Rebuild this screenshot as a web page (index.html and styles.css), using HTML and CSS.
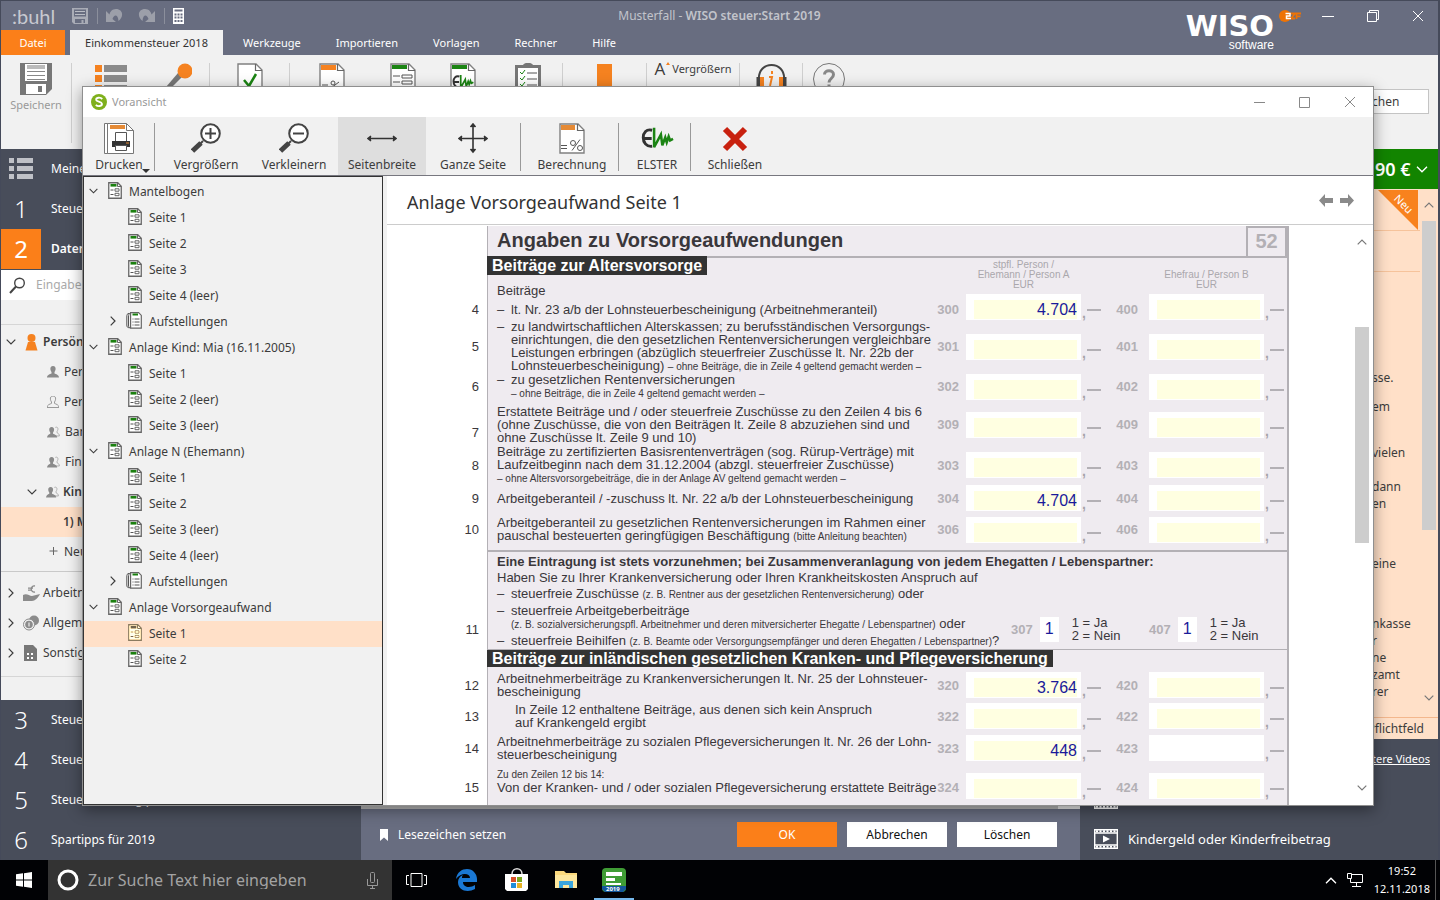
FILE: index.html
```html
<!DOCTYPE html>
<html lang="de">
<head>
<meta charset="utf-8">
<title>Musterfall - WISO steuer:Start 2019</title>
<link rel="stylesheet" href="styles.css">
</head>
<body>
<svg class="defs" aria-hidden="true">
  <symbol id="page" viewBox="0 0 14 17"><path d="M.75.75h9l3.5 3.5v12H.75z" fill="#fff" stroke="#666" stroke-width="1.3"/><path d="M9.5.8v3.7h3.7" fill="none" stroke="#666"/><path d="M2.5 2h6v2.6h-6z" fill="#1b8010"/><path d="M2.5 8h3M2.5 12.5h3" stroke="#555"/><path d="M7 6.800h4v2.400H7zM7 11.300h4v2.400H7z" fill="#fff" stroke="#666"/></symbol>
  <symbol id="stack" viewBox="0 0 16 17"><path d="M3.500 1.500C1 1 .8 3 .8 5v8c0 2 1 3 2.700 2.500M5 1C3 1 2.500 3 2.500 5v8c0 2 .5 3 1.500 3" fill="none" stroke="#555"/><path d="M4.600.7h8l2.700 2.700v12.800H4.600z" fill="#fff" stroke="#666" stroke-width="1.200"/><path d="M6.500 1.500h5.500v2H6.500z" fill="#1b8010"/><path d="M6.500 7h1m1 0h5m-7 3h1m1 0h5m-7 3h1m1 0h5" stroke="#555"/></symbol>
  <symbol id="down" viewBox="0 0 10 6"><path d="M.7.7 5 5 9.300.7" fill="none" stroke="currentColor" stroke-width="1.200"/></symbol>
  <symbol id="right" viewBox="0 0 6 10"><path d="M.7.7 5 5 .7 9.300" fill="none" stroke="currentColor" stroke-width="1.200"/></symbol>
  <symbol id="up" viewBox="0 0 10 6"><path d="M.7 5.300 5 1l4.300 4.300" fill="none" stroke="currentColor" stroke-width="1.200"/></symbol>
  <symbol id="person" viewBox="0 0 12 12"><path d="M6 0c2 0 2.800 1.500 2.600 3.200-.1 1.300-.7 2-1.100 2.800v1.400C9 8.200 11.800 8.500 12 11.500H0C.2 8.500 3 8.200 4.500 7.400V6c-.4-.8-1-1.500-1.100-2.800C3.200 1.500 4 0 6 0z"/></symbol>
  <symbol id="pair" viewBox="0 0 14 13"><path d="M9 1.500c2-.8 3 .5 2.800 2.200-.2 1-.6 1.600-.9 2.200v1.500c1 .5 2.300 1 2.500 3.400H9" fill="#f1f1f1" stroke="#aaa"/><g transform="translate(-1 1)" fill="#8b8b8b"><path d="M6 0c2 0 2.800 1.500 2.600 3.200-.1 1.300-.7 2-1.100 2.800v1.400C9 8.200 11.800 8.500 12 11.500H1C1.200 8.500 3 8.200 4.500 7.400V6c-.4-.8-1-1.500-1.100-2.800C3.200 1.500 4 0 6 0z"/></g></symbol>
  <symbol id="sheet" viewBox="0 0 26 31"><path d="M1 1h18l6 6v23H1z" fill="#fff" stroke="#808080" stroke-width="1.400"/><path d="M18.500 1v6.500H25" fill="none" stroke="#666" stroke-width="1.200"/></symbol>
  <symbol id="elw" viewBox="0 0 34 24"><path d="M11.500 3.500C-.5 0-1 21.500 11.500 20M3 12h8" fill="none" stroke="#333" stroke-width="3"/><path d="M13.500 1v20l7-13 1.500 11 3-8 1.500 5 2-6 1.500 4 3-1.500" fill="none" stroke="#1b8413" stroke-width="2.600"/></symbol>
  <symbol id="film" viewBox="0 0 24 20"><path d="M.7.7h22.600v18.600H.7zM0 4h24M0 16h24" fill="none" stroke="#fff" stroke-width="1.400"/><path d="M2 2.300h21M2 17.700h21" stroke="#fff" stroke-width="2" stroke-dasharray="2 1.500"/><path d="m9 6.500 7 3.500-7 3.500z" fill="#fff"/></symbol>
</svg>

<div class="desktop">
<div class="app">
  <header class="top">
    <div class="titlebar">
      <div class="quick">
        <span class="buhl">:buhl</span>
        <svg width="16" height="16" viewBox="0 0 16 16"><path d="M0 0h16v16H2l-2-2z" fill="#a9acb6"/><path d="M2 1.500h12v7H2zM3 11h10v4H3z" fill="#686d80"/><path d="M3 3.500h10m-10 3h10" stroke="#b9bcc4" fill="none"/><path d="M9.500 12h2v3h-2z" fill="#a9acb6"/></svg>
        <i class="tick"></i>
        <svg width="17" height="15" viewBox="0 0 17 15"><path d="M0 3v11h10l-3.500-3C8 6 12 6 12.500 13c6-5 4-12-2.500-12C6 1 4 4 3.500 6.500z" fill="#9c9fa9"/></svg>
        <svg class="redo" width="17" height="15" viewBox="0 0 17 15"><path d="M17 3v11H7l3.500-3C9 6 5 6 4.500 13-1.500 8 .5 1 7 1c4 0 6 3 6.500 5.500z" fill="#9c9fa9"/></svg>
        <i class="tick"></i>
        <svg width="11" height="16" viewBox="0 0 11 16"><path d="M0 0h11v16H0z" fill="#fff"/><path d="M1.500 1.500h8v2h-8z" fill="#686d80"/><path d="M1.500 6.500h8m-8 3h8m-8 3.500h8" stroke="#686d80" stroke-width="2" stroke-dasharray="2 1"/></svg>
      </div>
      <div class="caption">Musterfall - <b>WISO steuer:Start 2019</b></div>
      <div class="wincontrols">
        <button aria-label="Minimieren"><svg width="12" height="12"><path d="M0 6.500h12" stroke="#fff"/></svg></button>
        <button aria-label="Wiederherstellen"><svg width="12" height="12" fill="none" stroke="#fff"><path d="M.5 2.500h9v9h-9zM2.500 2.500v-2h9v9h-2"/></svg></button>
        <button aria-label="Schließen"><svg width="12" height="12"><path d="m1 1 10 10M11 1 1 11" stroke="#fff"/></svg></button>
      </div>
    </div>
    <nav class="tabs">
      <button class="file">Datei</button><button class="current">Einkommensteuer 2018</button><button>Werkzeuge</button><button>Importieren</button><button>Vorlagen</button><button>Rechner</button><button>Hilfe</button>
    </nav>
    <div class="wiso"><span class="wiso-name">WISO</span><span class="wiso-sub">software</span>
      <svg class="zdf" width="22" height="14" viewBox="0 0 22 14"><circle cx="6" cy="7" r="6" fill="#ee7305"/><path d="M11 4.500h5l-4 5h4M17.500 10V4.500H22M17.500 7.300h4" stroke="#ee7305" stroke-width="1.800" fill="none"/><path d="M6.500 4.500h4.500v2.500H7.500v2.500H12" fill="none" stroke="#fff" stroke-width="1.500"/></svg>
    </div>
  </header>

  <div class="ribbon">
    <div class="r w70"><svg width="32" height="32" viewBox="0 0 32 32"><path d="M0 0h32v26l-6 6H0z" fill="#777"/><path d="M5 1h22v17H5zM6 21h20v10H6z" fill="#fff"/><path d="M7 2h18v4H7z" fill="#bbb"/><path d="M7 8.500h18m-18 4h18m-18 4h18" stroke="#888"/><path d="M18 23h4v6h-4z" fill="#777"/></svg><button class="save" disabled>Speichern</button></div><i class="sep"></i>
    <div class="r w77"><svg width="32" height="32"><path d="M0 2h7v7H0zM0 12h7v7H0zM0 22h7v7H0z" fill="#f58220"/><path d="M9 2h23v7H9zM9 12h23v7H9zM9 22h23v7H9z" fill="#8b8b8b"/></svg></div>
    <div class="r w60"><svg width="26" height="32" viewBox="0 0 26 32"><path d="m0 24 12-14 4 4L2 28z" fill="#777"/><circle cx="19" cy="8" r="7.500" fill="#f58220"/></svg></div><i class="sep"></i>
    <div class="r w79"><svg width="26" height="31"><use href="#sheet"/><path d="m7 17 5 6 7-12" fill="none" stroke="#1b8413" stroke-width="2.500"/></svg></div><i class="sep"></i>
    <div class="r w83"><svg width="26" height="31"><use href="#sheet"/><path d="M2 2h15v5H2z" fill="#f58220"/><path d="M3 22h6m3 3 8-6" stroke="#555"/><circle cx="14" cy="20" r="2" fill="none" stroke="#555"/></svg></div>
    <div class="r w60"><svg width="26" height="31"><use href="#sheet"/><path d="M2 2h15v4H2z" fill="#1b8413"/><path d="M3 13h7m-7 6h7m2-7h10v3H12zm0 6h10v3H12z" fill="none" stroke="#555"/></svg></div>
    <div class="r w60"><svg width="26" height="31"><use href="#sheet"/><path d="M2 2h15v4H2z" fill="#1b8413"/><use href="#elw" x="2" y="11" width="22" height="16"/></svg></div>
    <div class="r w69"><svg width="26" height="32"><path d="M0 2h26v30H0z" fill="#777"/><path d="M8 2c2-3 8-3 10 0z" fill="#777"/><path d="M3 5h20v24H3z" fill="#fff"/><path d="M12 10h10m-10 6h10m-10 6h10" stroke="#555"/><path d="m5 9 2 2 3-4m-5 8 2 2 3-4m-5 8 2 2 3-4" fill="none" stroke="#1b8413"/></svg></div><i class="sep"></i>
    <div class="r w83"><svg width="15" height="32"><path d="M0 1h15v31H0z" fill="#f58220"/></svg></div><i class="sep"></i>
    <div class="r w92 zoomtext"><span class="bigA">A<i></i></span><span>Vergrößern</span></div><i class="sep"></i>
    <div class="r w62"><svg width="31" height="32"><path d="M3 17C1-3 30-3 28 17" fill="none" stroke="#444" stroke-width="2"/><path d="M3 14v9m25-9v9" stroke="#444" stroke-width="5"/><path d="M6 14v9m19-9v9" stroke="#f58220" stroke-width="4"/><path d="M13 14h3l-2 9M16 8v3" fill="none" stroke="#f58220" stroke-width="2"/></svg></div><i class="sep"></i>
    <div class="r w52"><svg width="32" height="32"><circle cx="16" cy="16" r="15.500" fill="none" stroke="#777"/><path d="M11.500 11.500c0-5 9-5 9 0 0 4-4.500 4-4.500 8m0 2v3" fill="none" stroke="#888" stroke-width="3"/></svg></div>
    <button class="find">Suchen</button>
  </div>

  <div class="main">
    <aside class="side">
      <div class="step"><span class="n"><svg width="24" height="22"><path d="M0 0h5v5H0zM0 8h5v5H0zM0 16h5v5H0zM8 0h16v5H8zM8 8h16v5H8zM8 16h16v5H8z" fill="#bfc1c7"/></svg></span>Meine</div>
      <div class="step"><span class="n">1</span>Steuerfall</div>
      <div class="step on"><span class="n">2</span><b>Daten</b></div>
      <label class="search"><svg width="17" height="17" fill="none"><circle cx="10.500" cy="6" r="4.800" stroke="#444" stroke-width="1.400"/><path d="M7 9.500 1 16" stroke="#444" stroke-width="2"/></svg><input type="text" placeholder="Eingabe" aria-label="Eingabe"></label>
      <div class="nav">
        <div class="navhead"></div>
        <div class="nrow strong"><svg class="tw" width="10" height="6"><use href="#down"/></svg><svg width="14" height="17" viewBox="0 0 14 17"><circle cx="6.500" cy="4" r="4" fill="#f58220"/><path d="M3 8h7l2.500 8.500H.5z" fill="#f58220"/></svg>Persönliches</div>
        <div class="nrow l2"><svg width="12" height="12" fill="#8b8b8b"><use href="#person"/></svg>Person</div>
        <div class="nrow l2"><svg width="12" height="12" fill="#f1f1f1" stroke="#999"><use href="#person"/></svg>Person</div>
        <div class="nrow l2"><svg width="13" height="12"><use href="#pair"/></svg>Bank</div>
        <div class="nrow l2"><svg width="13" height="12"><use href="#pair"/></svg>Finanz</div>
        <div class="nrow strong l1"><svg class="tw" width="10" height="6"><use href="#down"/></svg><svg width="13" height="12"><use href="#pair"/></svg>Kinder</div>
        <div class="nrow strong l3 hot">1) Mia</div>
        <div class="nrow l2"><svg width="12" height="12"><path d="M6.500 1v8m-4-4h8" stroke="#666"/></svg>Neu</div>
        <div class="nrow grp ruled"><svg class="tw" width="6" height="10"><use href="#right"/></svg><svg width="17" height="17" viewBox="0 0 17 17"><path d="M0 10c4-2 6 1 9 1l4-1 4-1c-2 4-5 7-8 7H0z" fill="#8b8b8b"/><path d="M12 1C7 0 7 8 12 7M5 3.200h5M5 5.200h4" fill="none" stroke="#8b8b8b" stroke-width="1.300"/></svg>Arbeitnehmer</div>
        <div class="nrow grp"><svg class="tw" width="6" height="10"><use href="#right"/></svg><svg width="17" height="16"><circle cx="11" cy="5.500" r="5" fill="#8b8b8b"/><circle cx="6" cy="9.500" r="5.500" fill="#f1f1f1" stroke="#8b8b8b"/><circle cx="6" cy="9.500" r="3.800" fill="#8b8b8b"/><path d="M6 7.500v4" stroke="#fff"/></svg>Allgemein</div>
        <div class="nrow grp"><svg class="tw" width="6" height="10"><use href="#right"/></svg><svg width="17" height="16"><path d="M1 0h9l4 4v12H1z" fill="#777"/><path d="M4 9h7m-7 4h7" stroke="#fff" stroke-width="2" stroke-dasharray="2 2"/></svg>Sonstiges</div>
        <div class="navfoot"></div>
      </div>
      <div class="step"><span class="n">3</span>Steuerspar</div>
      <div class="step"><span class="n">4</span>Steuer</div>
      <div class="step"><span class="n">5</span>Steuererklärung prüfen</div>
      <div class="step"><span class="n">6</span>Spartipps für 2019</div>
    </aside>

    <section class="centre">
      <div class="cscroll"></div>
      <footer class="actions">
        <svg width="8" height="12"><path d="M0 0h8v12L4 8.500 0 12z" fill="#fff"/></svg><a href="#" class="bookmark">Lesezeichen setzen</a>
        <button class="ok">OK</button><button>Abbrechen</button><button>Löschen</button>
      </footer>
    </section>

    <section class="help">
      <div class="price">90 €<svg width="12" height="7" viewBox="0 0 10 6"><use href="#down"/></svg></div>
      <div class="peach">
        <div class="neu"><span>Neu</span></div>
        <div class="pbody">
          <i class="pl a"></i><i class="pl b"></i>
          <p>sse.</p><p>em</p><p class="g2">vielen</p><p>dann<br>en</p><p class="g3">eine</p><p class="g3">nkasse<br>r<br>ne<br>zamt<br>rer</p>
        </div>
        <div class="pscroll"><svg width="10" height="6"><use href="#up"/></svg><i></i><svg width="10" height="6"><use href="#down"/></svg></div>
        <div class="duty">Pflichtfeld</div>
      </div>
      <div class="videos">
        <a href="#" class="more">Weitere Videos</a>
        <div class="video"><svg width="24" height="20"><use href="#film"/></svg></div>
        <div class="video"><svg width="24" height="20"><use href="#film"/></svg>Kindergeld oder Kinderfreibetrag</div>
      </div>
    </section>
  </div>

  <div class="dialog" role="dialog" aria-label="Voransicht">
    <div class="dtitle">
      <svg width="16" height="16"><circle cx="8" cy="8" r="8" fill="#7fb01c"/><path d="M11.300 5C9 2.800 4.800 3.500 5.200 6c.4 2 5.500 1.400 5.800 3.800.2 2.500-4.200 3-6.200 1" fill="none" stroke="#fff" stroke-width="1.800"/></svg>
      <span>Voransicht</span>
      <div class="wincontrols">
        <button aria-label="Minimieren"><svg width="11" height="11"><path d="M0 5.500h11" stroke="#888"/></svg></button>
        <button aria-label="Maximieren"><svg width="11" height="11"><path d="M.5.500h10v10H.5z" fill="none" stroke="#888"/></svg></button>
        <button aria-label="Schließen"><svg width="12" height="12"><path d="m1 1 10 10M11 1 1 11" stroke="#888"/></svg></button>
      </div>
    </div>
    <div class="tools">
      <button class="w70"><svg width="30" height="31" viewBox="0 0 30 31"><path d="M.5.500h3v30h-3zM3.500.500h19l7 7v23h-26z" fill="#fff" stroke="#777"/><path d="M22.500.500v7h7" fill="none" stroke="#777"/><path d="M6 2h15v4H6z" fill="#e58a35"/><path d="M11.500 9.500h11v9h-11z" fill="#fff" stroke="#555"/><path d="M8 18h18v6H8z" fill="#333"/><path d="M11.500 22.500h11v5h-11z" fill="#fff" stroke="#555"/><path d="M22 20h3" stroke="#e58a35"/></svg>Drucken<i class="drop"></i></button><i class="bar"></i>
      <button class="w88 gapl"><svg width="30" height="30"><circle cx="19.500" cy="10.500" r="9.300" fill="#fff" stroke="#444" stroke-width="2"/><path d="M14 10.500h11M19.500 5v11" stroke="#444" stroke-width="2"/><path d="m12 18-4 4" stroke="#444" stroke-width="2"/><path d="m10 20-8.500 8" stroke="#444" stroke-width="5"/></svg>Vergrößern</button>
      <button class="w88"><svg width="30" height="30"><circle cx="19.500" cy="10.500" r="9.300" fill="#fff" stroke="#444" stroke-width="2"/><path d="M14 10.500h11" stroke="#444" stroke-width="2"/><path d="m12 18-4 4" stroke="#444" stroke-width="2"/><path d="m10 20-8.500 8" stroke="#444" stroke-width="5"/></svg>Verkleinern</button>
      <button class="w88 active"><svg width="30" height="30"><path d="M2 15.500h26M4 13l-3 2.500L4 18M26 13l3 2.500-3 2.500" fill="#333" stroke="#333" stroke-width="1.600"/></svg>Seitenbreite</button>
      <button class="w94"><svg width="30" height="30"><path d="M2 15.500h26M15 2v27M4 13 1 15.500 4 18M26 13l3 2.500-3 2.500M12.500 4 15 1l2.500 3M12.500 26l2.500 3 2.500-3" fill="#333" stroke="#333" stroke-width="1.600"/></svg>Ganze Seite</button><i class="bar"></i>
      <button class="w97 shift"><svg width="26" height="31"><use href="#sheet"/><path d="M2 2h14v5H2z" fill="#e58a35"/><path d="M2 22.500h6m-6 3h6m5 2 8-11" stroke="#555"/><circle cx="14" cy="20" r="2.500" fill="none" stroke="#555"/><circle cx="21" cy="25" r="2.500" fill="none" stroke="#555"/></svg>Berechnung</button><i class="bar"></i>
      <button class="w71 shift"><svg width="33" height="30" viewBox="0 -3 34 30"><use href="#elw" width="34" height="24"/></svg>ELSTER</button><i class="bar"></i>
      <button class="w88"><svg width="26" height="30"><path d="m3 6 20 20M23 6 3 26" stroke="#c8210f" stroke-width="6"/></svg>Schließen</button>
    </div>
    <div class="dbody">
      <ul class="tree">
        <li><svg class="tw" width="9" height="6"><use href="#down"/></svg><svg width="14" height="17"><use href="#page"/></svg>Mantelbogen</li>
        <li class="sub"><svg width="14" height="17"><use href="#page"/></svg>Seite 1</li>
        <li class="sub"><svg width="14" height="17"><use href="#page"/></svg>Seite 2</li>
        <li class="sub"><svg width="14" height="17"><use href="#page"/></svg>Seite 3</li>
        <li class="sub"><svg width="14" height="17"><use href="#page"/></svg>Seite 4 (leer)</li>
        <li class="fold"><svg class="tw" width="6" height="10"><use href="#right"/></svg><svg width="16" height="17"><use href="#stack"/></svg>Aufstellungen</li>
        <li><svg class="tw" width="9" height="6"><use href="#down"/></svg><svg width="14" height="17"><use href="#page"/></svg>Anlage Kind: Mia (16.11.2005)</li>
        <li class="sub"><svg width="14" height="17"><use href="#page"/></svg>Seite 1</li>
        <li class="sub"><svg width="14" height="17"><use href="#page"/></svg>Seite 2 (leer)</li>
        <li class="sub"><svg width="14" height="17"><use href="#page"/></svg>Seite 3 (leer)</li>
        <li><svg class="tw" width="9" height="6"><use href="#down"/></svg><svg width="14" height="17"><use href="#page"/></svg>Anlage N (Ehemann)</li>
        <li class="sub"><svg width="14" height="17"><use href="#page"/></svg>Seite 1</li>
        <li class="sub"><svg width="14" height="17"><use href="#page"/></svg>Seite 2</li>
        <li class="sub"><svg width="14" height="17"><use href="#page"/></svg>Seite 3 (leer)</li>
        <li class="sub"><svg width="14" height="17"><use href="#page"/></svg>Seite 4 (leer)</li>
        <li class="fold"><svg class="tw" width="6" height="10"><use href="#right"/></svg><svg width="16" height="17"><use href="#stack"/></svg>Aufstellungen</li>
        <li><svg class="tw" width="9" height="6"><use href="#down"/></svg><svg width="14" height="17"><use href="#page"/></svg>Anlage Vorsorgeaufwand</li>
        <li class="sub sel"><svg width="14" height="17"><use href="#page"/></svg>Seite 1</li>
        <li class="sub"><svg width="14" height="17"><use href="#page"/></svg>Seite 2</li>
      </ul>
      <div class="view">
        <div class="vhead"><h1>Anlage Vorsorgeaufwand Seite 1</h1>
          <button aria-label="Vorherige Seite"><svg width="15" height="13"><path d="M0 6.500 6 0v4h8v5H6v4z" fill="#8a8a8a"/></svg></button><button aria-label="Nächste Seite"><svg width="15" height="13"><path d="M15 6.500 9 0v4H1v5h8v4z" fill="#8a8a8a"/></svg></button>
        </div>
        <div class="canvas">
          <form class="sheet">
            <div class="formtitle"><h2>Angaben zu Vorsorgeaufwendungen</h2><span class="formno">52</span></div>
            <div class="row heads"><div class="intro"><h3>Beiträge zur Altersvorsorge</h3><p>Beiträge</p></div><span class="who a">stpfl. Person /<br>Ehemann / Person A<br>EUR</span><span class="who b">Ehefrau / Person B<br>EUR</span></div>
            <div class="row r4"><span class="num">4</span><div class="txt"><p class="dash">lt. Nr. 23 a/b der Lohnsteuerbescheinigung (Arbeitnehmeranteil)</p></div>
              <label for="f300">300</label><span class="box"><input id="f300" value="4.704"></span><span class="cents"></span><label for="f400">400</label><span class="box"><input id="f400"></span><span class="cents"></span></div>
            <div class="row"><span class="num">5</span><div class="txt"><p class="dash">zu landwirtschaftlichen Alterskassen; zu berufsständischen Versorgungs-<br>einrichtungen, die den gesetzlichen Rentenversicherungen vergleichbare<br>Leistungen erbringen (abzüglich steuerfreier Zuschüsse lt. Nr. 22b der<br>Lohnsteuerbescheinigung) <small>– ohne Beiträge, die in Zeile 4 geltend gemacht werden –</small></p></div>
              <label for="f301">301</label><span class="box"><input id="f301"></span><span class="cents"></span><label for="f401">401</label><span class="box"><input id="f401"></span><span class="cents"></span></div>
            <div class="row"><span class="num">6</span><div class="txt"><p class="dash">zu gesetzlichen Rentenversicherungen<br><small>– ohne Beiträge, die in Zeile 4 geltend gemacht werden –</small></p></div>
              <label for="f302">302</label><span class="box"><input id="f302"></span><span class="cents"></span><label for="f402">402</label><span class="box"><input id="f402"></span><span class="cents"></span></div>
            <div class="row g5"><span class="num low">7</span><div class="txt"><p>Erstattete Beiträge und / oder steuerfreie Zuschüsse zu den Zeilen 4 bis 6<br>(ohne Zuschüsse, die von den Beiträgen lt. Zeile 8 abzuziehen sind und<br>ohne Zuschüsse lt. Zeile 9 und 10)</p></div>
              <label for="f309">309</label><span class="box"><input id="f309"></span><span class="cents"></span><label for="f409">409</label><span class="box"><input id="f409"></span><span class="cents"></span></div>
            <div class="row g1"><span class="num">8</span><div class="txt"><p>Beiträge zu zertifizierten Basisrentenverträgen (sog. Rürup-Verträge) mit<br>Laufzeitbeginn nach dem 31.12.2004 (abzgl. steuerfreier Zuschüsse)<br><small>– ohne Altersvorsorgebeiträge, die in der Anlage AV geltend gemacht werden –</small></p></div>
              <label for="f303">303</label><span class="box"><input id="f303"></span><span class="cents"></span><label for="f403">403</label><span class="box"><input id="f403"></span><span class="cents"></span></div>
            <div class="row"><span class="num">9</span><div class="txt"><p>Arbeitgeberanteil / -zuschuss lt. Nr. 22 a/b der Lohnsteuerbescheinigung</p></div>
              <label for="f304">304</label><span class="box"><input id="f304" value="4.704"></span><span class="cents"></span><label for="f404">404</label><span class="box"><input id="f404"></span><span class="cents"></span></div>
            <div class="row g5"><span class="num">10</span><div class="txt"><p>Arbeitgeberanteil zu gesetzlichen Rentenversicherungen im Rahmen einer<br>pauschal besteuerten geringfügigen Beschäftigung <small>(bitte Anleitung beachten)</small></p></div>
              <label for="f306">306</label><span class="box"><input id="f306"></span><span class="cents"></span><label for="f406">406</label><span class="box"><input id="f406"></span><span class="cents"></span></div>
            <div class="rule"></div>
            <div class="row eleven"><span class="num low">11</span>
              <div class="txt"><p><b>Eine Eintragung ist stets vorzunehmen; bei Zusammenveranlagung von jedem Ehegatten / Lebenspartner:</b></p><p>Haben Sie zu Ihrer Krankenversicherung oder Ihren Krankheitskosten Anspruch auf</p><p class="dash">steuerfreie Zuschüsse <small>(z. B. Rentner aus der gesetzlichen Rentenversicherung)</small> oder</p><p class="dash">steuerfreie Arbeitgeberbeiträge<br><small>(z. B. sozialversicherungspfl. Arbeitnehmer und deren mitversicherter Ehegatte / Lebenspartner)</small> oder</p><p class="dash">steuerfreie Beihilfen <small>(z. B. Beamte oder Versorgungsempfänger und deren Ehegatten / Lebenspartner)</small>?</p></div>
              <div class="choice"><label for="f307">307</label><input id="f307" value="1"><span>1 = Ja<br>2 = Nein</span></div>
              <div class="choice"><label for="f407">407</label><input id="f407" value="1"><span>1 = Ja<br>2 = Nein</span></div>
            </div>
            <div class="section"><h3>Beiträge zur inländischen gesetzlichen Kranken- und Pflegeversicherung</h3></div>
            <div class="row g5"><span class="num">12</span><div class="txt"><p>Arbeitnehmerbeiträge zu Krankenversicherungen lt. Nr. 25 der Lohnsteuer-<br>bescheinigung</p></div>
              <label for="f320">320</label><span class="box"><input id="f320" value="3.764"></span><span class="cents"></span><label for="f420">420</label><span class="box"><input id="f420"></span><span class="cents"></span></div>
            <div class="row g5"><span class="num">13</span><div class="txt in"><p>In Zeile 12 enthaltene Beiträge, aus denen sich kein Anspruch<br>auf Krankengeld ergibt</p></div>
              <label for="f322">322</label><span class="box"><input id="f322"></span><span class="cents"></span><label for="f422">422</label><span class="box"><input id="f422"></span><span class="cents"></span></div>
            <div class="row g6"><span class="num">14</span><div class="txt"><p>Arbeitnehmerbeiträge zu sozialen Pflegeversicherungen lt. Nr. 26 der Lohn-<br>steuerbescheinigung</p></div>
              <label for="f323">323</label><span class="box"><input id="f323" value="448"></span><span class="cents"></span><label for="f423">423</label><span class="box"><input id="f423" class="blank"></span><span class="cents"></span></div>
            <div class="row g6 r15"><span class="num">15</span><div class="txt"><p><small>Zu den Zeilen 12 bis 14:</small><br>Von der Kranken- und / oder sozialen Pflegeversicherung erstattete Beiträge</p></div>
              <label for="f324">324</label><span class="box"><input id="f324"></span><span class="cents"></span><label for="f424">424</label><span class="box"><input id="f424"></span><span class="cents"></span></div>
          </form>
          <div class="vscroll"><svg width="10" height="6"><use href="#up"/></svg><i></i><svg width="10" height="6"><use href="#down"/></svg></div>
        </div>
      </div>
    </div>
  </div>
</div>

<footer class="taskbar">
  <button class="start" aria-label="Start"><svg width="16" height="16"><path d="m0 2.300 7-1v6.200H0zM8 1.200 16 0v7.500H8zM0 8.500h7v6.200l-7-1zM8 8.500h8V16l-8-1.200z" fill="#fff"/></svg></button>
  <label class="ask"><svg width="22" height="22"><circle cx="11" cy="11" r="9" fill="none" stroke="#fff" stroke-width="3"/></svg><input type="text" placeholder="Zur Suche Text hier eingeben" aria-label="Zur Suche Text hier eingeben"><svg width="11" height="17" fill="none" stroke="#999"><rect x="3.500" y=".5" width="4" height="10" rx="1"/><path d="M.5 7v6.500h10V7M5.500 13.500v3M3 16.500h5"/></svg></label>
  <button aria-label="Taskansicht"><svg width="21" height="14" fill="none" stroke="#fff"><path d="M5 .5h11v13H5zM3 2.500H.5v9H3M18 2.500h2.500v9H18"/></svg></button>
  <button class="wide" aria-label="Edge"><svg width="21" height="22" viewBox="0 0 21 22"><path d="M0 10C1 3 6 0 11 0c6 0 10 5 10 10v3H7c0 6 8 6 12 3v4c-7 4-17 2-17-7 0-3 2-6 5-7-1 1-1 2-1 3h8c0-5-9-6-14 1z" fill="#1a78d4"/></svg></button>
  <button aria-label="Store"><svg width="24" height="24" viewBox="0 0 24 24"><path d="M7 6c0-7 10-7 10 0" fill="none" stroke="#ddd" stroke-width="1.500"/><path d="M0 6h23v15l-2 2H2l-2-2z" fill="#fff"/><path d="M6 9h5v5H6z" fill="#d8502a"/><path d="M12 9h5v5h-5z" fill="#7ba81e"/><path d="M6 15h5v5H6z" fill="#1f8ddb"/><path d="M12 15h5v5h-5z" fill="#e8b223"/></svg></button>
  <button aria-label="Explorer"><svg width="22" height="20"><path d="M0 1h9l2 2h11v15H0z" fill="#fbd97d"/><path d="M0 5h22v13H0z" fill="#fde79e"/><path d="M4 18v-7h14v7h-4v-3H8v3z" fill="#3aa5dd"/></svg></button>
  <button aria-label="WISO" class="open"><svg width="24" height="24"><rect width="24" height="24" rx="4" fill="#3f9c35"/><path d="M4 4h16v4H4zM4 10h9v3H4zM4 15h15v2H4z" fill="#fff"/><path d="M0 18h24v3l-3 3H3l-3-3z" fill="#14579b"/><text x="4" y="23" class="yr">2019</text></svg></button>
  <div class="tray"><svg width="12" height="7" viewBox="0 0 10 6"><use href="#up"/></svg>
    <svg width="17" height="15" fill="none" stroke="#fff"><path d="M3.500 1.500h12v8h-12zM9.500 9.500v4M5 13.500h9"/><path d="M.5.500h4v5h-4z" fill="#010205"/></svg>
    <span class="clock">19:52<br>12.11.2018</span></div>
</footer>
</div>
</body>
</html>
```
FILE: styles.css
```css
* { box-sizing: border-box; }
html, body { height: 100%; margin: 0; }
body { font: 12px/18px "Noto Sans", "Open Sans", sans-serif; color: #3c3c3c; overflow: hidden; }
button, input { font: inherit; color: inherit; border: 0; background: none; padding: 0; margin: 0; }
p, h1, h2, h3, ul { margin: 0; padding: 0; }
svg { flex: none; display: block; }
.defs { position: absolute; width: 0; height: 0; }

.desktop { height: 100%; display: flex; flex-direction: column; background: #010205; }
.app { flex: 1; min-height: 0; position: relative; display: flex; flex-direction: column; background: #484d5a; border: 1px solid #454a5a; border-width: 1px 2px 0 1px; }

/* title bar */
.top { position: relative; background: #686d80; color: #fff; }
.titlebar { height: 29px; display: grid; grid-template-columns: 1fr auto 1fr; align-items: center; }
.quick { display: flex; align-items: center; gap: 8px; padding-left: 11px; }
.buhl { font: 20px/24px Lato, "Open Sans", sans-serif; color: #c7c9d0; width: 52px; }
.quick svg { margin-right: 1px; }
.quick .redo { margin-left: 6px; }
.tick { width: 1px; height: 16px; background: #8b8f9c; }
.caption { color: #c2c4cb; }
.caption b { font-weight: 600; }
.wincontrols { display: flex; justify-content: flex-end; padding-right: 14px; gap: 33px; }
.wincontrols button { width: 12px; }
.tabs { display: flex; height: 25px; font-size: 11px; }
.tabs button { padding: 0 17px; margin-right: 1px; }
.tabs .file { background: #fb7f19; width: 64px; margin-right: 5px; padding: 0; }
.tabs .current { background: #f1f1f1; color: #333; padding: 0; width: 153px; margin-right: 3px; }
.wiso { position: absolute; right: 164px; top: 12px; display: flex; flex-direction: column; align-items: flex-end; }
.wiso-name { font: bold 29px/26px "DejaVu Sans", sans-serif; }
.wiso-sub { font: 12px/12px "Liberation Sans", sans-serif; }
.zdf { position: absolute; left: 100%; top: -4px; margin-left: 5px; }

/* ribbon */
.ribbon { height: 94px; background: #f1f1f1; display: flex; align-items: flex-start; padding-top: 8px; font-size: 11px; }
.r { display: flex; flex-direction: column; align-items: center; flex: none; }
.save { color: #999; margin-top: 1px; }
.sep { width: 1px; height: 80px; background: #cfcfcf; flex: none; }
.w52 { width: 52px; } .w60 { width: 60px; } .w62 { width: 62px; } .w69 { width: 69px; } .w70 { width: 70px; } .w71 { width: 71px; }
.w77 { width: 77px; } .w79 { width: 79px; } .w83 { width: 83px; } .w88 { width: 88px; } .w92 { width: 92px; } .w94 { width: 94px; } .w97 { width: 97px; }
.zoomtext { flex-direction: row; justify-content: center; height: 12px; gap: 2px; }
.bigA { font: 17px/16px "Open Sans", sans-serif; position: relative; padding-right: 5px; }
.bigA i { position: absolute; right: 0; top: 1px; border: 2px solid transparent; border-bottom: 3px solid #f58220; border-top: 0; }
.find { margin: 26px 9px 0 auto; width: 140px; height: 25px; background: #fff; border: 1px solid #c4c4c4; padding-left: 68px; text-align: left; font-size: 12px; }

/* main columns */
.main { flex: 1; min-height: 0; display: flex; }
.side { width: 360px; display: flex; flex-direction: column; color: #fff; }
.step { height: 40px; flex: none; display: flex; align-items: center; }
.step .n { width: 40px; height: 40px; margin-right: 10px; display: flex; align-items: center; justify-content: center; font: 300 24px/40px "Noto Sans", "Open Sans", sans-serif; }
.on .n { background: #fb7f19; font-weight: 400; }
.step b { font-weight: 600; }
.search { height: 30px; flex: none; background: #fff; display: flex; align-items: center; padding-left: 8px; gap: 10px; margin-top: 1px; }
.search input { flex: 1; }
.search input::placeholder { color: #aaa; opacity: 1; }
.nav { background: #f1f1f1; color: #3c3c3c; flex: 1; min-height: 0; overflow: hidden; }
.navhead { height: 25px; border-bottom: 1px solid #d6d6d6; margin-bottom: 2px; }
.nrow { height: 30px; display: flex; align-items: center; gap: 6px; padding-left: 5px; }
.nrow .tw { margin-right: 2px; }
.nrow.strong { font-weight: 600; }
.nrow.strong > .tw + svg { margin: 0 -2px 0 1px; }
.nrow.l1 { padding-left: 26px; }
.nrow.l2 { padding-left: 46px; gap: 5px; }
.nrow.l3 { padding-left: 62px; }
.nrow.grp { gap: 3px; }
.nrow.grp .tw { margin: 0 6px 0 2px; }
.hot { background: #ffe0c8; }
.nrow.ruled { border-top: 1px solid #c9c9c9; margin-top: 4px; height: 37px; padding-top: 6px; }
.navfoot { border-top: 1px solid #d6d6d6; margin-top: 8px; }

.centre { flex: 1; display: flex; flex-direction: column; background: #f1f1f1; }
.cscroll { flex: 1; border-right: 22px solid #e6e6e6; background: #b4b4b4; }
.actions { height: 51px; background: #686d80; color: #fff; display: flex; align-items: center; gap: 10px; padding: 0 23px 0 19px; }
.bookmark { color: #fff; text-decoration: none; margin-right: auto; }
.actions button { width: 100px; height: 25px; background: #fff; color: #111; }
.actions .ok { background: #fb7f19; color: #fff; }

.help { width: 358px; display: flex; flex-direction: column; color: #3c3c3c; }
.price { height: 40px; background: #128400; color: #fff; display: flex; align-items: center; gap: 5px; padding-left: 295px; font: 600 18px/40px "Noto Sans", "Open Sans", sans-serif; }
.peach { background: #ffe0c8; flex: 1; min-height: 0; display: grid; grid-template-columns: 1fr 18px; grid-template-rows: 1fr 22px; position: relative; }
.neu { position: absolute; right: 20px; top: 1px; width: 40px; height: 40px; background: #f8821d; clip-path: polygon(0 0, 100% 0, 100% 100%); color: #fff; }
.neu span { position: absolute; right: 4px; top: 5px; transform: rotate(45deg); font-size: 11px; }
.pbody { padding: 0 0 0 292px; overflow: hidden; display: flex; flex-direction: column; line-height: 17px; }
.pl { height: 1px; background: #f6c39b; margin-left: -292px; flex: none; }
.pl.a { margin-top: 41px; }
.pl.b { margin: 40px 0 97px -292px; }
.pbody p { margin-bottom: 12px; }
.pbody p:nth-of-type(2) { margin-bottom: 29px; }
.pbody p.g2 { margin-bottom: 17px; }
.pbody p:nth-of-type(4) { margin-bottom: 43px; }
.pbody p.g3 { margin-bottom: 43px; }
.pscroll { display: flex; flex-direction: column; align-items: center; padding: 13px 0 16px 0; color: #777; }
.pscroll i { width: 14px; flex: 0 0 309px; background: #cdcdcd; margin: 13px 0 auto; }
.duty { grid-column: 1 / 3; border-top: 1px solid #f3b78d; text-align: right; padding-right: 14px; line-height: 21px; }
.videos { height: 121px; color: #fff; padding: 10px 8px 0 14px; }
.more { display: block; text-align: right; color: #fff; font-size: 11px; line-height: 20px; margin-bottom: 10px; }
.video { height: 40px; display: flex; align-items: center; gap: 10px; font-size: 13px; }

/* preview window */
.dialog { position: absolute; top: 85px; left: 81px; right: 64px; bottom: 54px; background: #f1f1f1; border: 1px solid #8f8f8f; box-shadow: 0 4px 14px rgba(0, 0, 0, .4); display: flex; flex-direction: column; }
.dtitle { height: 30px; background: #fff; display: flex; align-items: center; padding-left: 8px; gap: 5px; color: #999; flex: none; font-size: 11px; }
.dtitle .wincontrols { margin-left: auto; padding-right: 17px; }
.tools { height: 59px; flex: none; display: flex; border-bottom: 1px solid #77777f; padding-left: 1px; }
.tools button { height: 58px; display: flex; flex-direction: column; align-items: center; padding-top: 6px; gap: 2px; position: relative; }
.tools .shift { padding-left: 5px; }
.tools svg { height: 31px; }
.tools .active { background: #dedede; }
.gapl { margin-left: 7px; }
.bar { width: 1px; height: 48px; margin-top: 6px; background: #999; }
.drop { position: absolute; right: 4px; bottom: 2px; border: 4px solid transparent; border-top-color: #333; border-bottom: 0; }
.dbody { flex: 1; min-height: 0; display: flex; }
.tree { width: 300px; flex: none; border: 1px solid #333; list-style: none; padding-top: 2px; margin-right: 4px; }
.tree li { height: 26px; display: flex; align-items: center; gap: 7px; padding-left: 5px; }
.tree svg { margin-bottom: 3px; }
.tree .tw { margin-right: 3px; }
.tree .sub { padding-left: 44px; }
.tree .fold { padding-left: 26px; }
.tree .sel { background: #ffe0c8; }
.sel svg { filter: sepia(1); }

.view { flex: 1; min-width: 0; display: flex; flex-direction: column; background: #fff; }
.vhead { height: 49px; flex: none; display: flex; align-items: center; border-bottom: 1px solid #ccc; padding: 0 19px 0 20px; gap: 5px; }
.vhead h1 { font-size: 18px; line-height: 26px; font-weight: 400; color: #333; margin: 4px auto 0 0; }
.canvas { flex: 1; min-height: 0; display: flex; overflow: hidden; }
.vscroll { width: 18px; display: flex; flex-direction: column; align-items: center; color: #777; padding: 14px 4px 14px 0; }
.vscroll i { width: 14px; flex: 0 1 216px; margin: 82px 0 auto; background: #cdcdcd; }

/* tax form */
.sheet { flex: 1; min-width: 0; margin: 1px 66px 0 0; font: 13px/13px "Liberation Sans", Arial, sans-serif; color: #3a373b; border-right: 2px solid #b3b0b5; background: linear-gradient(to right, #fff 100px, #b3b0b5 100px, #b3b0b5 101px, #efebf0 101px); overflow: hidden; white-space: nowrap; }
.formtitle { margin-left: 100px; padding-left: 10px; height: 32px; border-bottom: 2px solid #b3b0b5; display: flex; align-items: center; justify-content: space-between; }
.formtitle h2 { font-size: 20px; line-height: 24px; margin-bottom: 2px; }
.formno { width: 41px; height: 30px; border: 2px solid #b3b0b5; border-bottom: 0; color: #b3b0b5; font: bold 20px/26px "Liberation Sans", Arial, sans-serif; text-align: center; }
.section { margin-left: 100px; height: 18px; border-top: 1px solid #b3b0b5; }
.sheet h3 { display: inline-block; background: #333; color: #fff; font-size: 16px; line-height: 17px; padding: 0 5px; }
.row { display: grid; grid-template-columns: 92px minmax(0, 1fr) 34px 115px 23px 45px 115px 23px; align-items: center; }
.heads { margin-top: -2px; align-items: start; }
.intro { grid-column: 1 / 4; padding-left: 100px; }
.intro h3 { line-height: 19px; }
.intro p { margin: 9px 0 -3px 10px; }
.who { text-align: center; font-size: 10px; line-height: 10px; color: #aaa7ac; margin-top: 4px; }
.who.a { grid-column: 4; }
.who.b { grid-column: 7; margin-top: 14px; }
.num { text-align: right; }
.num.low { align-self: end; padding-bottom: 5px; }
.txt { padding-left: 18px; }
.txt.in { padding-left: 36px; }
.dash { padding-left: 14px; position: relative; }
.dash::before { content: "–"; position: absolute; left: 0; top: 0; }
small { font-size: 10px; line-height: 12px; }
.row > label { text-align: right; font-weight: bold; color: #b3b0b5; padding-right: 7px; }
.row > label ~ label { padding-right: 11px; }
.box { background: #fff; height: 26px; padding: 6px 4px 1px 8px; }
.box input { display: block; width: 100%; height: 19px; background: #ffffe1; text-align: right; font-size: 16px; color: #1a1a9a; }
.box .blank { background: #fff; }
.cents { height: 26px; position: relative; }
.cents::before { content: ""; display: block; margin: 15px 3px 0 6px; height: 2px; background: #b3b0b5; }
.cents::after { content: ","; position: absolute; left: 1px; bottom: 0; font: bold 14px/13px "Liberation Sans", sans-serif; color: #a7a4a9; }
.r4 { align-items: end; }
.r4 .num, .r4 .txt, .r4 > label { padding-bottom: 4px; }
.r15 { align-items: end; }
.r15 .num, .r15 .txt, .r15 > label { padding-bottom: 5px; }
.g1 { margin-top: 1px; } .g5 { margin-top: 5px; } .g6 { margin-top: 6px; }
.rule { margin: 7px 0 0 100px; height: 2px; background: #b3b0b5; }
.eleven { grid-template-columns: 92px 1fr auto auto; padding-top: 3px; height: 97px; align-items: start; }
.eleven .txt { width: 0; }
.eleven .txt p { margin-bottom: 3px; }
.eleven .num { padding-bottom: 15px; }
.choice { align-self: end; display: flex; align-items: center; width: 138px; margin-bottom: 9px; }
.choice label { font-weight: bold; color: #b3b0b5; margin-right: 7px; }
.choice input { width: 19px; height: 25px; background: #fff; text-align: center; font-size: 16px; color: #1a1a9a; margin-right: 13px; }

/* taskbar */
.taskbar { height: 40px; flex: none; display: flex; color: #fff; }
.taskbar button { width: 49px; display: flex; align-items: center; justify-content: center; }
.taskbar .start { width: 48px; }
.taskbar .wide { width: 51px; }
.taskbar .open { width: 40px; margin-left: 4px; border-bottom: 2px solid #76b9ed; padding-top: 2px; }
.ask { width: 344px; background: #333; display: flex; align-items: center; padding: 0 14px 0 9px; gap: 9px; }
.ask input { flex: 1; min-width: 0; font-size: 16px; }
.ask input::placeholder { color: #a3a3a3; opacity: 1; }
.yr { font: bold 6px "Noto Sans", sans-serif; fill: #fff; }
.tray { margin-left: auto; display: flex; align-items: center; gap: 10px; padding-right: 5px; margin-right: 4px; border-right: 1px solid #555; }
.clock { text-align: center; font-size: 11px; }
```
